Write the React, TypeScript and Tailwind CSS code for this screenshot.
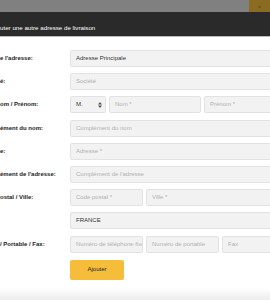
import React from "react";

type Field = {
    placeholder?: string;
    value?: string;
    width?: string;
};

type Row = {
    label: string;
    fields: Field[];
    select?: string;
};

// Visible part of the form (page is cropped on the left)
const ROWS: Row[] = [
    { label: "e l'adresse:", fields: [{ value: "Adresse Principale" }] },
    { label: "é:", fields: [{ placeholder: "Société" }] },
    {
        label: "om / Prénom:",
        select: "M.",
        fields: [
            { placeholder: "Nom *", width: "w-[92px]" },
            { placeholder: "Prénom *" },
        ],
    },
    { label: "ément du nom:", fields: [{ placeholder: "Complément du nom" }] },
    { label: "e:", fields: [{ placeholder: "Adresse *" }] },
    { label: "ément de l'adresse:", fields: [{ placeholder: "Complément de l'adresse" }] },
    {
        label: "ostal / Ville:",
        fields: [{ placeholder: "Code postal *", width: "w-[73px]" }, { placeholder: "Ville *" }],
    },
    { label: "", fields: [{ value: "FRANCE" }] },
    {
        label: "/ Portable / Fax:",
        fields: [
            { placeholder: "Numéro de téléphone fixe", width: "w-[73px]" },
            { placeholder: "Numéro de portable", width: "w-[73px]" },
            { placeholder: "Fax" },
        ],
    },
];

function Input({ field }: { field: Field }) {
    return (
        <div
            className={`${field.width ?? "flex-1"} flex h-[17px] shrink-0 items-center overflow-hidden whitespace-nowrap rounded-[2px] border border-[#e2e2e2] bg-[#f2f2f2] px-[5px]`}
        >
            {field.value ? (
                <span className="text-[#333]">{field.value}</span>
            ) : (
                <span className="text-[#b0b0b0]">{field.placeholder}</span>
            )}
        </div>
    );
}

function Select({ value }: { value: string }) {
    return (
        <div className="flex h-[17px] w-[36px] shrink-0 items-center justify-between rounded-[2px] border border-[#e2e2e2] bg-[#f2f2f2] pl-[5px] pr-[3px]">
            <span className="text-[#333]">{value}</span>
            <svg width="4" height="6" viewBox="0 0 4 6" aria-hidden="true">
                <path d="M2 0 L4 2.4 L0 2.4 Z M2 6 L4 3.6 L0 3.6 Z" fill="#555" />
            </svg>
        </div>
    );
}

export default function App() {
    return (
        <div className="relative h-[300px] w-[270px] overflow-hidden bg-white font-['Liberation_Sans',Arial,sans-serif] text-[6px]">
            {/* Dimmed page behind the modal */}
            <div className="flex h-[12px] bg-[#808080]">
                <div className="flex-1" />
                <div className="flex w-[21px] items-end justify-center bg-[#8a6b22] pb-[1px] text-[5px] leading-none text-[#3a2c0c]">
                    ^
                </div>
            </div>

            {/* Modal header */}
            <div className="flex h-[25px] items-center border-b border-[#bdbdbd] bg-[#2a2a2a] pt-[8px] text-[6.2px] text-white">
                uter une autre adresse de livraison
            </div>

            {/* Form */}
            <div className="grid grid-cols-[70px_225px] gap-y-[6.2px] pt-[13px]">
                {ROWS.map((row, i) => (
                    <React.Fragment key={i}>
                        <div className="flex h-[17px] items-center whitespace-nowrap font-bold text-[#222]">
                            {row.label}
                        </div>
                        <div className="flex h-[17px] gap-[3px]">
                            {row.select && <Select value={row.select} />}
                            {row.fields.map((f, j) => (
                                <Input key={j} field={f} />
                            ))}
                        </div>
                    </React.Fragment>
                ))}
                <div />
                <div className="mt-[1px]">
                    <button className="flex h-[20px] w-[54px] items-center justify-center rounded-[2px] bg-[#f5bd3a] text-[#222]">
                        Ajouter
                    </button>
                </div>
            </div>

            {/* Modal bottom edge */}
            <div className="mt-[8px] h-[12px] bg-gradient-to-b from-white to-[#ececec]" />
        </div>
    );
}
